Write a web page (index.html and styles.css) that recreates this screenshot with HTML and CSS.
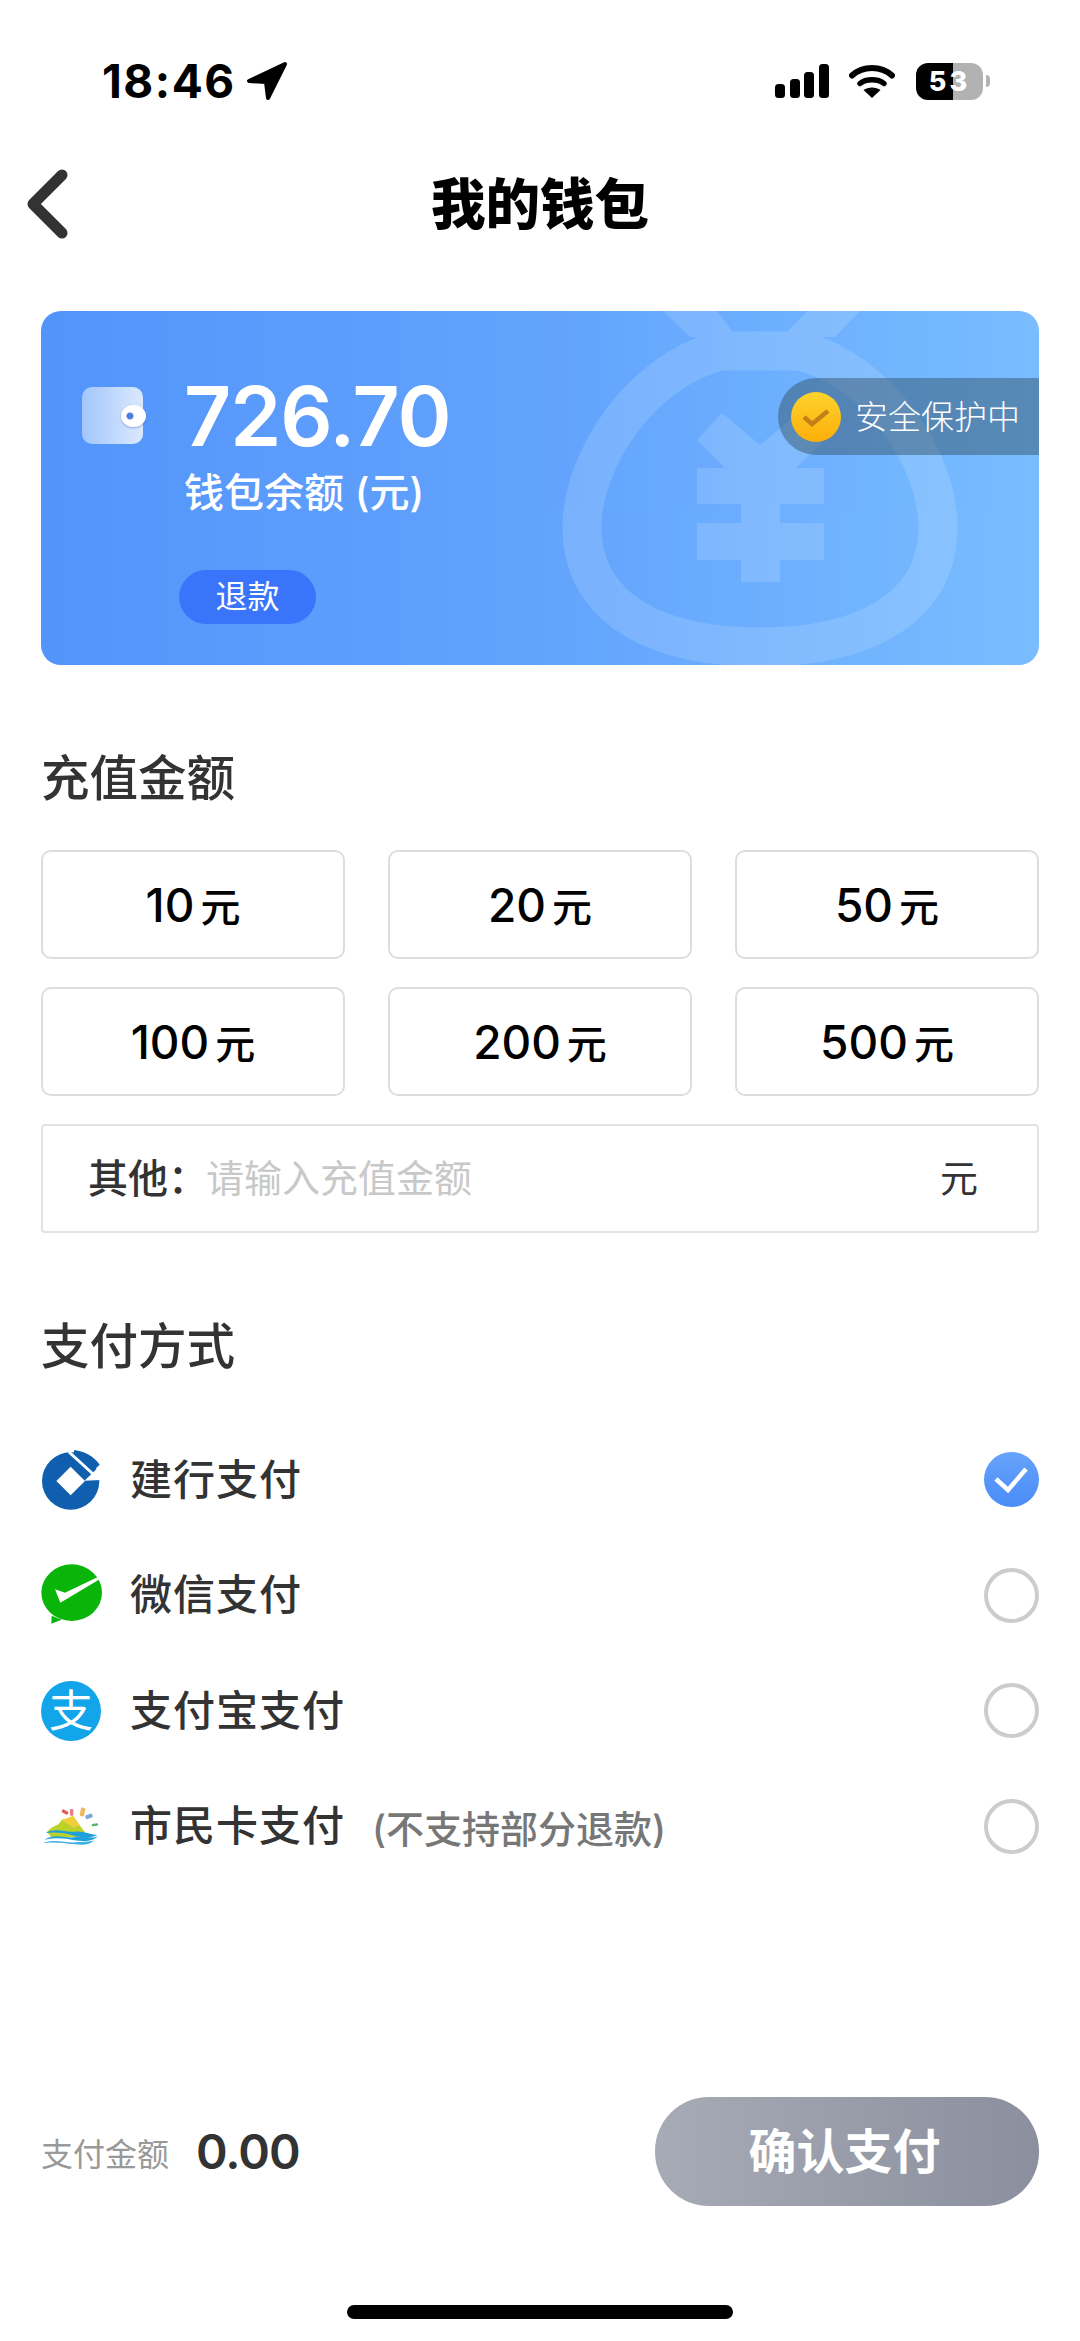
FILE: index.html
```html
<!DOCTYPE html>
<html lang="zh-CN">
<head>
  <meta charset="UTF-8" />
  <meta name="viewport" content="width=device-width, initial-scale=1.0" />
  <title>我的钱包</title>
  <link rel="stylesheet" href="styles.css">
</head>
<body>
  <div class="page">
    <div class="status-bar">
      <div class="status-left">
        <span class="time">18:46</span>
        <svg class="arrow-icon" width="42" height="40" viewBox="0 0 42 40">
          <path d="M39 3 L3 20 L20 21 L22 37 Z" fill="#000" stroke="#000" stroke-width="4" stroke-linejoin="round" />
        </svg>
      </div>
      <div class="status-right">
        <svg width="54" height="34" viewBox="0 0 54 34">
          <rect x="0" y="20" width="10" height="14" rx="3.5" />
          <rect x="15" y="15" width="10" height="19" rx="3.5" />
          <rect x="29" y="8" width="10" height="26" rx="3.5" />
          <rect x="44" y="0" width="10" height="34" rx="3.5" />
        </svg>
        <svg class="wifi-icon" width="46" height="34" viewBox="0 0 46 34">
          <path d="M3 11.5 C14 1.5 32 1.5 43 11.5" fill="none" stroke="#000" stroke-width="6" stroke-linecap="round" />
          <path d="M11 19.5 C17 14.5 29 14.5 35 19.5" fill="none" stroke="#000" stroke-width="5.5" stroke-linecap="round" />
          <path d="M23 34 L14.5 26 C19 22.5 27 22.5 31.5 26 Z" fill="#000" />
        </svg>
        <div class="battery">53</div>
        <span class="battery-nub"></span>
      </div>
    </div>

    <div class="nav">
      <svg class="back-icon" width="42" height="70" viewBox="0 0 42 70">
        <path d="M36 6 L7 35 L36 64" fill="none" stroke="#333" stroke-width="11" stroke-linecap="round" stroke-linejoin="round" />
      </svg>
      <h1 class="nav-title">我的钱包</h1>
    </div>

    <div class="wallet-card">
      <svg class="bag-bg" width="499" height="354" viewBox="0 0 499 354">
        <g fill="#fff" opacity="0.14">
          <path d="M180 40 H260 C340 60 398 150 398 216 C398 300 320 336 220 336 C120 336 42 300 42 216 C42 150 100 60 180 40 Z" fill="none" stroke="#fff" stroke-width="39" />
          <polygon points="123,0 177,0 193,21 247,21 267,0 320,0 295,26 150,26" />
          <polygon points="182,102 220,134 259,102 284,129 256,157 284,157 284,193 240,193 240,212 284,212 284,249 240,249 240,271 201,271 201,249 157,249 157,212 201,212 201,193 157,193 157,157 185,157 157,129" />
        </g>
      </svg>
      <div class="wallet-main">
        <div class="wallet-icon"><span class="wallet-clasp"></span></div>
        <div class="wallet-info">
          <div class="wallet-amount">726.70</div>
          <div class="wallet-label">钱包余额 (元)</div>
          <div class="refund-btn">退款</div>
        </div>
      </div>
      <div class="safe-tag">
        <svg width="50" height="50" viewBox="0 0 50 50">
          <defs>
            <linearGradient id="coin" x1="0" y1="0" x2="0" y2="1">
              <stop offset="0" stop-color="#fdd32d" />
              <stop offset="1" stop-color="#fdae0a" />
            </linearGradient>
          </defs>
          <circle cx="25" cy="25" r="25" fill="url(#coin)" />
          <path d="M13 25 L21 32 L37 19" fill="none" stroke="#c47f17" stroke-width="4.5" />
        </svg>
        <span class="safe-text">安全保护中</span>
      </div>
    </div>

    <h2 class="section-title title-charge">充值金额</h2>
    <div class="amount-grid">
      <div class="amount-btn"><b>10</b>元</div>
      <div class="amount-btn"><b>20</b>元</div>
      <div class="amount-btn"><b>50</b>元</div>
      <div class="amount-btn"><b>100</b>元</div>
      <div class="amount-btn"><b>200</b>元</div>
      <div class="amount-btn"><b>500</b>元</div>
    </div>
    <div class="other-row">
      <span class="other-label">其他：</span>
      <span class="other-hint">请输入充值金额</span>
      <span class="other-unit">元</span>
    </div>

    <h2 class="section-title title-pay">支付方式</h2>
    <div class="pay-list">
      <div class="pay-row">
        <div class="pay-logo">
          <svg width="60" height="60" viewBox="0 0 180 180">
            <circle cx="89" cy="93" r="86" fill="#0f5fae" />
            <polygon points="130,92 154,70 185,38 185,90" fill="#fff" />
            <path d="M84 6 L156 72" stroke="#fff" stroke-width="9" />
            <path d="M100 0 C130 4 160 20 176 44 L156 62 L98 8 Z" fill="#0f5fae" />
            <polygon points="89,50 132,93 89,136 46,93" fill="#fff" />
          </svg>
        </div>
        <span class="pay-name">建行支付</span>
        <span class="radio radio-on">
          <svg width="54" height="54" viewBox="0 0 54 54">
            <path d="M12 27 L24 38 L42 17" fill="none" stroke="#fff" stroke-width="4.5" />
          </svg>
        </span>
      </div>
      <div class="pay-row">
        <div class="pay-logo">
          <svg width="62" height="62" viewBox="0 0 186 186">
            <path d="M32 155 L31 179 L62 167 Z" fill="#09b509" />
            <ellipse cx="92" cy="86" rx="91" ry="85" fill="#09b509" />
            <polygon points="42,76 72,86 172,38 176,46 58,116" fill="#fff" />
          </svg>
        </div>
        <span class="pay-name">微信支付</span>
        <span class="radio"></span>
      </div>
      <div class="pay-row">
        <div class="pay-logo">
          <span class="alipay-logo">支</span>
        </div>
        <span class="pay-name">支付宝支付</span>
        <span class="radio"></span>
      </div>
      <div class="pay-row">
        <div class="pay-logo">
          <svg class="city-logo" width="60" height="42" viewBox="0 0 180 126">
            <path d="M18 75 C30 60 42 58 52 52 L65 36 L80 42 L96 26 L116 55 L132 76 L110 90 L30 90 Z" fill="#bcd22a" />
            <path d="M62 40 L96 26 L116 55 L100 62 Z" fill="#f0cf3c" />
            <rect x="62" y="10" width="20" height="10" rx="3" fill="#e2584f" transform="rotate(30 72 15)" />
            <rect x="87" y="6" width="10" height="20" rx="3" fill="#ea7b87" />
            <rect x="118" y="2" width="13" height="26" rx="4" fill="#f2b45c" transform="rotate(12 124 15)" />
            <rect x="133" y="22" width="22" height="12" rx="4" fill="#7ea6dc" transform="rotate(-20 144 28)" />
            <rect x="152" y="50" width="19" height="7" rx="3" fill="#58b368" transform="rotate(-8 161 53)" />
            <path d="M14 78 C45 60 75 78 100 74 C125 70 145 82 170 84 C150 94 125 92 100 86 C70 78 45 74 14 78 Z" fill="#1f9fdc" />
            <path d="M10 98 C45 76 75 96 105 90 C130 88 150 94 170 90 C150 104 125 104 100 100 C70 92 40 92 10 98 Z" fill="#1f9fdc" />
            <path d="M5 108 C40 94 75 108 105 106 C125 104 145 106 160 100 C145 116 120 114 100 112 C70 108 40 104 5 108 Z" fill="#3fb2e6" />
          </svg>
        </div>
        <span class="pay-name">市民卡支付</span>
        <span class="pay-note">(不支持部分退款)</span>
        <span class="radio"></span>
      </div>
    </div>

    <div class="footer">
      <span class="footer-label">支付金额</span>
      <span class="footer-amount">0.00</span>
      <div class="confirm-btn">确认支付</div>
    </div>
    <div class="home-bar"></div>
  </div>
</body>
</html>
```

FILE: styles.css
```css
* {
  box-sizing: border-box;
}

body {
  margin: 0;
  background-color: #ffffff;
  font-family: Inter, "Noto Sans CJK SC", sans-serif;
  color: #333333;
}

.page {
  width: 1080px;
  height: 2341px;
  overflow: hidden;
  display: flex;
  flex-direction: column;
  padding: 0 41px 22px;
}

/* status bar */
.status-bar {
  height: 40px;
  margin-top: 61px;
  display: flex;
  align-items: center;
  justify-content: space-between;
}

.status-left {
  display: flex;
  align-items: center;
  gap: 10px;
  padding-left: 61px;
}

.time {
  font-size: 46px;
  font-weight: 700;
  letter-spacing: 1.5px;
  color: #000000;
}

.status-right {
  display: flex;
  align-items: center;
  padding-right: 49px;
}

.wifi-icon {
  margin-left: 20px;
}

.battery {
  width: 67px;
  height: 37px;
  margin-left: 21px;
  border-radius: 12px;
  background: linear-gradient(to right, #000000 55%, #b2b2b2 55%);
  color: #ffffff;
  font-size: 27px;
  font-weight: 800;
  letter-spacing: 3px;
  line-height: 37px;
  text-align: center;
}

.battery-nub {
  width: 4px;
  height: 12px;
  margin-left: 3px;
  border-radius: 0 4px 4px 0;
  background-color: #b2b2b2;
}

/* nav */
.nav {
  position: relative;
  height: 108px;
  margin-top: 49px;
  display: flex;
  align-items: center;
  justify-content: center;
  padding-bottom: 8px;
}

.back-icon {
  position: absolute;
  left: -15px;
  top: 19px;
}

.nav-title {
  margin: 0;
  font-size: 54.5px;
  font-weight: 900;
  color: #000000;
}

/* wallet card */
.wallet-card {
  position: relative;
  height: 354px;
  margin-top: 53px;
  border-radius: 20px;
  overflow: hidden;
  background: linear-gradient(to right, #5394fb 0%, #62a3fd 50%, #79bdff 100%);
}

.bag-bg {
  position: absolute;
  right: 0;
  top: 0;
}

.wallet-main {
  position: relative;
  display: flex;
  padding: 76px 0 0 41px;
}

.wallet-icon {
  position: relative;
  width: 61px;
  height: 57px;
  border-radius: 10px;
  background: linear-gradient(to right, #a2c6fb, #dbe9fe);
}

.wallet-clasp {
  position: absolute;
  right: -3px;
  top: 18px;
  width: 25px;
  height: 22px;
  border-radius: 50%;
  background: radial-gradient(circle at 9px 11px, #4a7fe0 3px, #ffffff 4px);
  box-shadow: 0 1px 2px rgba(60, 100, 190, 0.5);
}

.wallet-info {
  margin-left: 41px;
  margin-top: -15px;
  display: flex;
  flex-direction: column;
  align-items: flex-start;
  color: #ffffff;
}

.wallet-amount {
  font-size: 82px;
  font-weight: 600;
  letter-spacing: -1px;
  line-height: 90px;
}

.wallet-label {
  margin-top: 3px;
  font-size: 40px;
  font-weight: 500;
  line-height: 56px;
}

.refund-btn {
  width: 137px;
  height: 54px;
  margin-top: 49px;
  margin-left: -5px;
  border-radius: 27px;
  background-color: #3a74fb;
  font-size: 32px;
  line-height: 54px;
  text-align: center;
}

.safe-tag {
  position: absolute;
  right: 0;
  top: 67px;
  width: 261px;
  height: 77px;
  display: flex;
  align-items: center;
  gap: 14px;
  padding-left: 13px;
  border-radius: 39px 0 0 39px;
  background-color: rgba(50, 80, 100, 0.47);
  color: #ffffff;
  font-size: 33px;
  font-weight: 300;
}

.safe-text {
  margin-top: -4px;
}

/* sections */
.section-title {
  margin: 0;
  height: 60px;
  font-size: 48.5px;
  font-weight: 500;
  line-height: 60px;
  color: #333333;
}

.title-charge {
  margin-top: 84px;
}

.title-pay {
  margin-top: 84px;
}

.amount-grid {
  display: grid;
  grid-template-columns: repeat(3, 304px);
  grid-auto-rows: 109px;
  column-gap: 43px;
  row-gap: 28px;
  margin-top: 41px;
}

.amount-btn {
  display: flex;
  align-items: center;
  justify-content: center;
  gap: 6px;
  border: 2px solid #dddddd;
  border-radius: 10px;
  color: #000000;
  font-size: 40px;
  font-weight: 500;
}

.amount-btn b {
  font-size: 46px;
  font-weight: 500;
}

.other-row {
  height: 109px;
  margin-top: 28px;
  display: flex;
  align-items: center;
  padding: 0 59px 6px 45px;
  border: 2px solid #e2e2e2;
  border-radius: 4px;
  font-size: 38px;
}

.other-label {
  width: 118px;
  flex-shrink: 0;
  white-space: nowrap;
  font-size: 40px;
  font-weight: 500;
}

.other-hint {
  flex: 1;
  color: #c8c8c8;
}

.other-unit {
  color: #333333;
}

/* pay list */
.pay-list {
  margin-top: 45px;
}

.pay-row {
  height: 115.5px;
  display: flex;
  align-items: center;
}

.pay-logo {
  width: 89px;
  display: flex;
  align-items: center;
}

.city-logo {
  margin-top: 4px;
}

.pay-name {
  font-size: 42px;
  font-weight: 500;
  line-height: 56px;
  letter-spacing: 1px;
}

.pay-note {
  margin-left: 27px;
  font-size: 38px;
  font-weight: 500;
  color: #777777;
}

.radio {
  width: 55px;
  height: 55px;
  margin-left: auto;
  border: 4px solid #cccccc;
  border-radius: 50%;
}

.radio-on {
  border: none;
  background: linear-gradient(to bottom, #66a3fb, #4a8cf8);
}

.alipay-logo {
  width: 60px;
  height: 60px;
  border-radius: 50%;
  background-color: #12a5ea;
  color: #ffffff;
  font-size: 44px;
  line-height: 60px;
  text-align: center;
}

/* footer */
.footer {
  height: 109px;
  margin-top: auto;
  display: flex;
  align-items: center;
}

.footer-label {
  font-size: 32px;
  color: #999999;
}

.footer-amount {
  margin-left: 27px;
  font-size: 48px;
  font-weight: 600;
  letter-spacing: -1px;
  color: #333333;
}

.confirm-btn {
  width: 384px;
  height: 109px;
  margin-left: auto;
  padding-right: 5px;
  border-radius: 54px;
  background: linear-gradient(to right, #a6abb5, #8b8f9e);
  color: #ffffff;
  font-size: 48px;
  font-weight: 700;
  line-height: 109px;
  text-align: center;
}

.home-bar {
  width: 386px;
  height: 14px;
  margin: 99px auto 0;
  border-radius: 7px;
  background-color: #000000;
}
```
